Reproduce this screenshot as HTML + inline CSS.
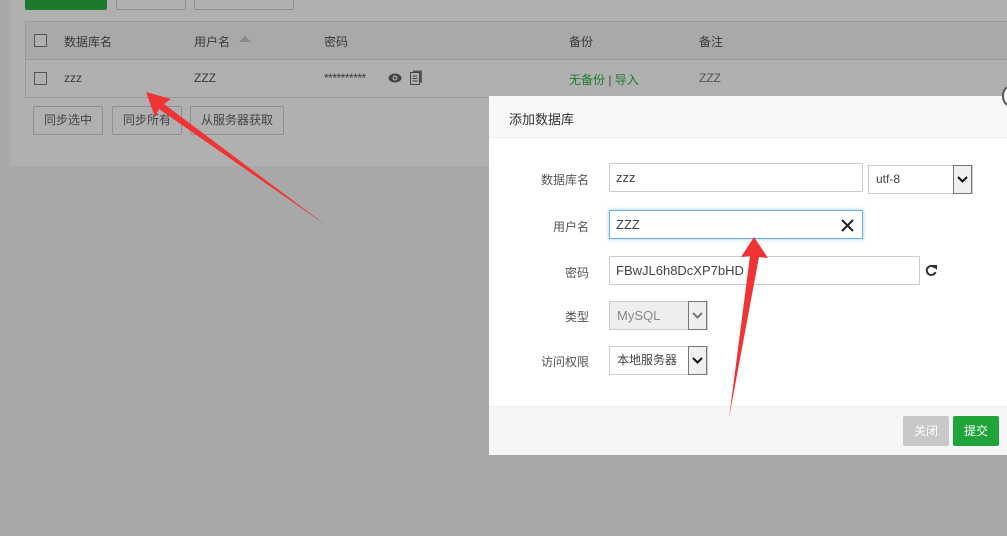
<!DOCTYPE html>
<html><head><meta charset="utf-8"><style>
*{margin:0;padding:0;box-sizing:border-box}
body{width:1007px;height:536px;overflow:hidden;background:#a8a8a8;font-family:"Liberation Sans","Noto Sans CJK SC",sans-serif;font-size:12px;color:#333;position:relative}
.abs{position:absolute}
.panel{left:10px;top:0;width:997px;height:166px;background:#b0b0b0}
.btn{position:absolute;border:1px solid #8f8f8f;border-radius:2px;background:#b0b0b0;color:#444;font-size:12px;text-align:center;line-height:27px;height:29px}
.cb{position:absolute;width:13px;height:13px;border:1px solid #555;background:#b0b0b0}
.t{position:absolute;font-size:12px;color:#3a3a3a;white-space:nowrap}
.modal{left:489px;top:96px;width:518px;height:359px;background:#fff}
.mh{position:absolute;left:0;top:0;width:518px;height:42px;background:#f8f8f8;border-bottom:1px solid #eee}
.mf{position:absolute;left:0;top:310px;width:518px;height:49px;background:#f6f6f6;border-top:1px solid #eee}
.lbl{position:absolute;right:418px;font-size:12px;color:#555;white-space:nowrap;text-align:right}
.inp{position:absolute;border:1px solid #ccc;height:29px;font-size:13px;color:#444;line-height:27px;padding-left:6px;background:#fff}
.sel{position:absolute;border:1px solid #ccc;height:29px;font-size:12px;color:#444;line-height:27px;padding-left:7px;background:#fff}
.arr{position:absolute;right:0;top:-1px;width:19px;height:29px;border:1px solid #777;background:#f0f0f0}
</style></head><body>
<div class="abs panel"></div>
<div class="abs" style="left:25px;top:-8px;width:82px;height:18px;background:#1d7a2c;border-radius:2px"></div>
<div class="abs" style="left:116px;top:-8px;width:70px;height:18px;border:1px solid #8f8f8f;border-radius:2px"></div>
<div class="abs" style="left:194px;top:-8px;width:100px;height:18px;border:1px solid #8f8f8f;border-radius:2px"></div>
<div class="abs" style="left:25px;top:21px;width:982px;height:77px;border:1px solid #999;border-right:none;background:#b0b0b0"></div>
<div class="abs" style="left:26px;top:22px;width:981px;height:38px;background:#a9a9a9;border-bottom:1px solid #999"></div>
<div class="cb" style="left:34px;top:34px"></div>
<div class="t" style="left:64px;top:33px">数据库名</div>
<div class="t" style="left:194px;top:33px">用户名</div>
<div class="abs" style="left:239px;top:36px;width:0;height:0;border-left:6px solid transparent;border-right:6px solid transparent;border-bottom:6px solid #888"></div>
<div class="t" style="left:324px;top:33px">密码</div>
<div class="t" style="left:569px;top:33px">备份</div>
<div class="t" style="left:699px;top:33px">备注</div>
<div class="cb" style="left:34px;top:72px"></div>
<div class="t" style="left:64px;top:71px">zzz</div>
<div class="t" style="left:194px;top:71px">ZZZ</div>
<div class="t" style="left:324px;top:71px;letter-spacing:-0.5px">**********</div>
<svg class="abs" style="left:388px;top:72px" width="14" height="12"><ellipse cx="7" cy="6" rx="6.5" ry="4.5" fill="#444"/><circle cx="7" cy="6" r="2.5" fill="#b0b0b0"/><circle cx="7" cy="6" r="1.3" fill="#444"/></svg>
<svg class="abs" style="left:410px;top:70px" width="13" height="15"><rect x="3" y="0.5" width="9" height="12" fill="#555"/><rect x="0.5" y="2.5" width="9" height="12" fill="#b0b0b0" stroke="#444"/><path d="M2.5 6h5M2.5 8.5h5M2.5 11h5" stroke="#444"/></svg>
<div class="t" style="left:569px;top:71px;color:#1d7a2c">无备份 <span style="color:#444">|</span> 导入</div>
<div class="t" style="left:699px;top:71px;color:#555">ZZZ</div>
<div class="btn" style="left:33px;top:106px;width:70px">同步选中</div>
<div class="btn" style="left:112px;top:106px;width:70px">同步所有</div>
<div class="btn" style="left:190px;top:106px;width:94px">从服务器获取</div>

<div class="abs modal">
<div class="mh"><div class="t" style="left:20px;top:13px;font-size:13px;color:#333">添加数据库</div></div>
<div class="lbl" style="top:75px">数据库名</div>
<div class="inp" style="left:120px;top:67px;width:254px">zzz</div>
<div class="sel" style="left:379px;top:69px;width:105px">utf-8<div class="arr"><svg width="17" height="27"><path d="M4 11l4.5 4.5L13 11" stroke="#111" stroke-width="2" fill="none"/></svg></div></div>
<div class="lbl" style="top:122px">用户名</div>
<div class="inp" style="left:120px;top:114px;width:254px;border-color:#66afe9;box-shadow:0 0 4px rgba(102,175,233,.6)">ZZZ<svg class="abs" style="left:231px;top:8px" width="13" height="13"><path d="M1 1l11 11M12 1L1 12" stroke="#222" stroke-width="2"/></svg></div>
<div class="lbl" style="top:168px">密码</div>
<div class="inp" style="left:120px;top:160px;width:311px">FBwJL6h8DcXP7bHD</div>
<svg class="abs" style="left:436px;top:168px" width="12" height="13"><path d="M10 4A4.5 4.5 0 1 0 10.5 8" stroke="#333" stroke-width="2" fill="none"/><path d="M7 1h5v5z" fill="#333"/></svg>
<div class="lbl" style="top:212px">类型</div>
<div class="sel" style="left:120px;top:205px;width:99px;background:#eee;color:#888;font-size:13px">MySQL<div class="arr" style="background:#eee"><svg width="17" height="27"><path d="M4 11l4.5 4.5L13 11" stroke="#777" stroke-width="2" fill="none"/></svg></div></div>
<div class="lbl" style="top:257px">访问权限</div>
<div class="sel" style="left:120px;top:250px;width:99px">本地服务器<div class="arr"><svg width="17" height="27"><path d="M4 11l4.5 4.5L13 11" stroke="#111" stroke-width="2" fill="none"/></svg></div></div>
<div class="mf">
<div class="abs" style="left:414px;top:9px;width:46px;height:30px;background:#c8c8c8;color:#fff;text-align:center;line-height:30px;border-radius:2px">关闭</div>
<div class="abs" style="left:464px;top:9px;width:46px;height:30px;background:#20a53a;color:#fff;text-align:center;line-height:30px;border-radius:2px">提交</div>
</div>
</div>
<div class="abs" style="left:1002px;top:86px;width:14px;height:20px;border:2px solid #555;border-radius:50%;background:#fff"></div>

<svg class="abs" style="left:0;top:0" width="1007" height="536">
<polygon points="146,92 171,99 164,104 327,226 159,109 155,117" fill="#f03434"/>
<polygon points="754,237 768,258 759,257 729,418 750,256 741,257" fill="#f03434"/>
</svg>
</body></html>
